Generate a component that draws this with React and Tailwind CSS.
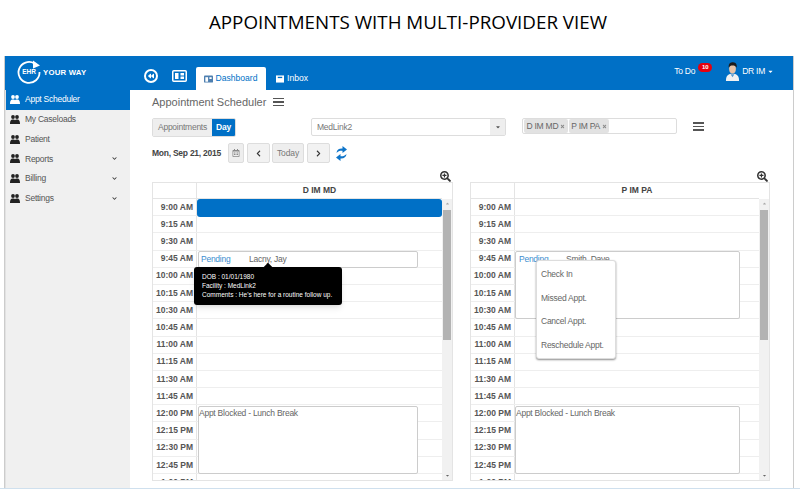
import React from "react";
import { FaChevronDown, FaSearchPlus, FaRegCalendarAlt, FaChevronLeft, FaChevronRight, FaBackward, FaTimes, FaCaretDown, FaCaretUp } from "react-icons/fa";

const menu = [
  { label: "Appt Scheduler", active: true },
  { label: "My Caseloads" },
  { label: "Patient" },
  { label: "Reports", arrow: true },
  { label: "Billing", arrow: true },
  { label: "Settings", arrow: true },
];

const times = [
  "9:00 AM", "9:15 AM", "9:30 AM", "9:45 AM", "10:00 AM", "10:15 AM", "10:30 AM", "10:45 AM",
  "11:00 AM", "11:15 AM", "11:30 AM", "11:45 AM", "12:00 PM", "12:15 PM", "12:30 PM", "12:45 PM", "1:00 PM",
];

const Logo = () => (
  <div className="flex items-center w-[125px] pl-[12px] pb-[3px] h-full">
    <div className="relative w-[24px] h-[24px] shrink-0">
      <svg viewBox="0 0 24 24" className="absolute inset-0 w-full h-full" fill="none">
        <path d="M17.5 3.5 A10.5 10.5 0 1 0 22.5 12" stroke="#fff" strokeWidth="1.8" />
        <path d="M16 0.5 L23 5.5 L16 8.5 Z" fill="#fff" />
      </svg>
      <span className="absolute inset-0 flex items-center justify-center text-[6.5px] font-bold text-white">EHR</span>
    </div>
    <span className="ml-[2px] pt-[2px] text-[7.8px] font-bold text-white tracking-[0.2px] whitespace-nowrap">YOUR WAY</span>
  </div>
);

const Avatar = () => (
  <svg viewBox="0 0 16 20" className="w-[15px] h-[19px]">
    <path d="M1 20 C1 14 4 12.5 8 12.5 C12 12.5 15 14 15 20 Z" fill="#f2f2f2" />
    <ellipse cx="8" cy="7" rx="3.6" ry="5" fill="#e8c4a8" />
    <path d="M4 6 C3.5 1 6 0 8.5 0 C12 0 13 3 12.5 6 C11.5 4 10 3.5 8 3.5 C6 3.5 5 4 4 6 Z" fill="#1c1c1c" />
    <path d="M6 13 L8 16 L10 13 Z" fill="#5a9bd0" />
  </svg>
);

const UsersIcon = ({ className }) => (
  <svg viewBox="0 0 10 9" className={`w-[10px] h-[9px] shrink-0 ${className}`} fill="currentColor">
    <circle cx="3" cy="2" r="1.9" />
    <circle cx="7" cy="2" r="1.9" />
    <path d="M0 8.5 C0 5.5 1.2 4.5 2.4 4.2 L3 5 L3.6 4.2 C4.2 4.4 4.7 4.7 5 5.2 C5.3 4.7 5.8 4.4 6.4 4.2 L7 5 L7.6 4.2 C8.8 4.5 10 5.5 10 8.5 L10 9 L0 9 Z" />
  </svg>
);

const RefreshIcon = () => (
  <svg viewBox="0 0 11 15" className="ml-[6px] w-[11px] h-[15px] shrink-0" fill="#0f75c9">
    <path d="M0.5 7 C0.8 3.8 3 2.4 6.5 2.6 L6.5 0 L11 3.6 L6.5 7 L6.5 4.7 C4 4.5 2.2 5 0.5 7 Z" />
    <path d="M10.5 8 C10.2 11.2 8 12.6 4.5 12.4 L4.5 15 L0 11.4 L4.5 8 L4.5 10.3 C7 10.5 8.8 10 10.5 8 Z" />
  </svg>
);

const Header = () => (
  <div className="flex h-[34px] bg-[#0070c6] text-white shrink-0">
    <Logo />
    <div className="flex items-center gap-[14px] pl-[14px] pt-[6px]">
      <div className="w-[14px] h-[14px] rounded-full border-2 border-white flex items-center justify-center">
        <FaBackward className="text-[6px]" />
      </div>
      <svg viewBox="0 0 15 12" className="w-[15px] h-[12px]" fill="none">
        <rect x="0.75" y="0.75" width="13.5" height="10.5" rx="1" stroke="#fff" strokeWidth="1.5" />
        <rect x="3" y="3" width="3.5" height="6" fill="#fff" />
        <rect x="8.5" y="3" width="3.5" height="2.5" fill="#fff" />
        <rect x="8.5" y="6.5" width="3.5" height="2.5" fill="#fff" />
      </svg>
    </div>
    <div className="self-end flex items-center gap-[2px] ml-[9px] h-[23px] w-[70px] justify-center bg-white rounded-t-[2px] text-[#0070c6] text-[8.6px]">
      <svg viewBox="0 0 10 8" className="w-[9px] h-[8px]">
        <rect width="10" height="8" rx="1" fill="#4d7fb0" />
        <rect x="1.5" y="2" width="3" height="5" fill="#fff" />
        <rect x="6" y="2" width="2.5" height="2" fill="#fff" />
      </svg>
      Dashboard
    </div>
    <div className="self-end flex items-center gap-[3px] ml-[10px] h-[23px] text-[8.6px]">
      <svg viewBox="0 0 9 8" className="w-[8px] h-[8px]">
        <rect width="9" height="8" fill="#fff" />
        <rect x="2" y="1.5" width="5" height="1.5" fill="#0070c6" />
      </svg>
      Inbox
    </div>
    <div className="ml-auto flex items-center pr-[19px] pb-[3px] text-[8.5px] tracking-[-0.25px]">
      <span>To Do</span>
      <span className="relative -top-[4px] ml-[3px] w-[14px] h-[9px] rounded-full bg-[#e8000d] text-[6px] font-bold flex items-center justify-center">10</span>
      <span className="ml-[13px] mr-[2px]"><Avatar /></span>
      <span>DR IM</span>
      <FaCaretDown className="ml-[2px] text-[7px]" />
    </div>
  </div>
);

const Sidebar = () => (
  <div className="w-[125px] shrink-0 bg-[#f0f0f0] border-l border-[#e2e2e2]">
    {menu.map((m) => (
      <div
        key={m.label}
        className={`flex items-center h-[19.7px] pl-[4px] pr-[13px] text-[8.5px] tracking-[-0.25px] ${m.active ? "bg-[#0070c6] text-white" : "text-[#555]"}`}
      >
        <UsersIcon className={m.active ? "text-white" : "text-[#222]"} />
        <span className="ml-[5px]">{m.label}</span>
        {m.arrow && <FaChevronDown className="ml-auto text-[5px] text-[#333]" />}
      </div>
    ))}
  </div>
);

const Burger = () => (
  <div className="flex flex-col gap-[2px] w-[11px]">
    <span className="h-[1.5px] bg-[#555]" />
    <span className="h-[1.5px] bg-[#555]" />
    <span className="h-[1.5px] bg-[#555]" />
  </div>
);

const Tag = ({ children }) => (
  <span className="flex items-center gap-[2px] h-[14px] px-[2.5px] bg-[#e2e2e2] rounded-[2px] text-[8.5px] tracking-[-0.25px] text-[#666]">
    {children}
    <FaTimes className="text-[5px] text-[#888]" />
  </span>
);

const Toolbar = () => (
  <>
    <div className="flex items-center h-[24px] gap-[7px]">
      <h1 className="text-[11px] text-[#666] font-normal">Appointment Scheduler</h1>
      <Burger />
    </div>
    <div className="flex items-start mt-[4px] h-[19px]">
      <div className="flex h-[19px] w-[84px] text-[8.5px] tracking-[-0.25px] rounded-[2px] overflow-hidden border border-[#ddd]">
        <span className="w-[59px] bg-[#eee] text-[#777] flex items-center justify-center">Appointments</span>
        <span className="flex-1 bg-[#0070c6] text-white font-bold flex items-center justify-center">Day</span>
      </div>
      <div className="flex ml-[75px] h-[18px] w-[195px] border border-[#ddd] rounded-[2px] text-[8.5px] tracking-[-0.25px] text-[#777]">
        <span className="flex-1 pl-[5px] flex items-center">MedLink2</span>
        <span className="w-[15px] bg-[#eee] flex items-center justify-center">
          <FaCaretDown className="text-[6px] text-[#555]" />
        </span>
      </div>
      <div className="flex items-center gap-[1px] ml-[16px] h-[16px] w-[155px] pl-[1px] border border-[#ddd] rounded-[2px]">
        <Tag>D IM MD</Tag>
        <Tag>P IM PA</Tag>
      </div>
      <div className="ml-[16px] mt-[4px]"><Burger /></div>
    </div>
    <div className="flex items-center h-[20px] mt-[6px] text-[#666]">
      <span className="w-[76px] text-[8.5px] tracking-[-0.25px] font-bold text-[#444]">Mon, Sep 21, 2015</span>
      <span className="flex items-center justify-center w-[16px] h-[20px] bg-[#eee] border border-[#ddd] rounded-[2px]">
        <FaRegCalendarAlt className="text-[8px] text-[#888]" />
      </span>
      <span className="flex items-center justify-center ml-[3px] w-[23px] h-[20px] bg-[#f2f2f2] border border-[#ddd] rounded-[2px]">
        <FaChevronLeft className="text-[7px] text-[#333]" />
      </span>
      <span className="flex items-center justify-center ml-[2px] w-[32px] h-[20px] bg-[#eee] border border-[#ddd] rounded-[2px] text-[8.5px] tracking-[-0.1px] text-[#777]">Today</span>
      <span className="flex items-center justify-center ml-[3px] w-[23px] h-[20px] bg-[#f2f2f2] border border-[#ddd] rounded-[2px]">
        <FaChevronRight className="text-[7px] text-[#333]" />
      </span>
      <RefreshIcon />
    </div>
  </>
);

const Calendar = ({ name, width, children }) => (
  <div className={`relative ${width}`}>
    <FaSearchPlus className="absolute right-[2px] -top-[11px] text-[11px] text-[#333]" />
    <div className="flex h-[299px] border border-[#e4e4e4] overflow-hidden">
      <div className="flex-1 min-w-0">
        <div className="flex h-[16px] border-b border-[#e4e4e4] text-[8.5px] font-bold text-[#444]">
          <div className="w-[44px] border-r border-[#e4e4e4]" />
          <div className="flex-1 flex items-center justify-center">{name}</div>
        </div>
        <div className="relative">
          {times.map((t) => (
            <div key={t} className="flex h-[17.2px] border-b border-[#eee]">
              <div className="w-[44px] pr-[3px] border-r border-[#e4e4e4] flex items-center justify-end text-[8.5px] font-bold text-[#555]">{t}</div>
              <div className="flex-1" />
            </div>
          ))}
          {children}
        </div>
      </div>
      <div className="w-[10px] shrink-0 bg-[#f1f1f1] relative mt-[16px]">
        <FaCaretUp className="absolute left-[2.5px] top-[2px] text-[5px] text-[#aaa]" />
        <div className="absolute inset-x-[1px] top-[11px] h-[130px] bg-[#b3b3b3]" />
        <FaCaretDown className="absolute left-[2.5px] bottom-[2px] text-[5px] text-[#666]" />
      </div>
    </div>
  </div>
);

const Appt = ({ className, children }) => (
  <div className={`absolute border border-[#ccc] rounded-[2px] bg-white text-[8.5px] tracking-[-0.25px] text-[#666] ${className}`}>{children}</div>
);

const Tooltip = () => (
  <div className="absolute left-[41px] top-[68px] w-[148px] h-[38px] bg-black rounded-[3px] pl-[8px] pt-[5px] text-[6.5px] leading-[9px] text-white shadow-md">
    <span className="absolute left-[71px] -top-[3px] w-[6px] h-[6px] bg-black rotate-45" />
    <div>DOB : 01/01/1980</div>
    <div>Facility : MedLink2</div>
    <div>Comments : He's here for a routine follow up.</div>
  </div>
);

const ContextMenu = () => (
  <div className="absolute left-[65px] top-[61px] w-[80px] h-[99px] bg-white border border-[#ddd] rounded-[3px] shadow-[0_1px_2px_rgba(0,0,0,0.45)] pl-[4px] pt-[7px] text-[8.5px] tracking-[-0.25px] text-[#666]">
    <div className="h-[23.6px]">Check In</div>
    <div className="h-[23.6px]">Missed Appt.</div>
    <div className="h-[23.6px]">Cancel Appt.</div>
    <div className="h-[23.6px]">Reschedule Appt.</div>
  </div>
);

const App = () => {
  return (
    <div className="relative w-[800px] h-[491px] overflow-hidden bg-white font-['Liberation_Sans',Arial,sans-serif]">
      <div className="h-[56px] flex items-start justify-center pt-[10px] pl-[16px] text-[18.8px] leading-[24px] text-black font-['Open_Sans',sans-serif]">
        APPOINTMENTS WITH MULTI-PROVIDER VIEW
      </div>
      <div className="ml-[4px] w-[790px] h-[432px] flex flex-col border-x border-[#ccc]">
        <Header />
        <div className="flex flex-1 min-h-0">
          <Sidebar />
          <div className="flex-1 pl-[22px]">
            <Toolbar />
            <div className="flex gap-[17px] mt-[19px]">
              <Calendar name="D IM MD" width="w-[301px]">
                <div className="absolute left-[44px] right-0 top-0 h-[17.5px] bg-[#0070c6] rounded-[3px]" />
                <Appt className="left-[45px] top-[52px] w-[220px] h-[17px] flex items-center pl-[2px]">
                  <span className="text-[#3b8ed0] w-[48px]">Pending</span>Lacny, Jay
                </Appt>
                <Tooltip />
                <Appt className="left-[45px] top-[207px] w-[220px] h-[68px] leading-[13px]">Appt Blocked - Lunch Break</Appt>
              </Calendar>
              <Calendar name="P IM PA" width="w-[300px]">
                <Appt className="left-[44px] top-[52px] w-[225px] h-[68px] pl-[3px] leading-[14px]">
                  <span className="text-[#3b8ed0] inline-block w-[47px]">Pending</span>Smith, Dave
                </Appt>
                <ContextMenu />
                <Appt className="left-[44px] top-[207px] w-[225px] h-[68px] leading-[13px]">Appt Blocked - Lunch Break</Appt>
              </Calendar>
            </div>
          </div>
        </div>
      </div>
      <div className="h-[1px] bg-[#cfe0ee]" />
    </div>
  );
};

export default App;
